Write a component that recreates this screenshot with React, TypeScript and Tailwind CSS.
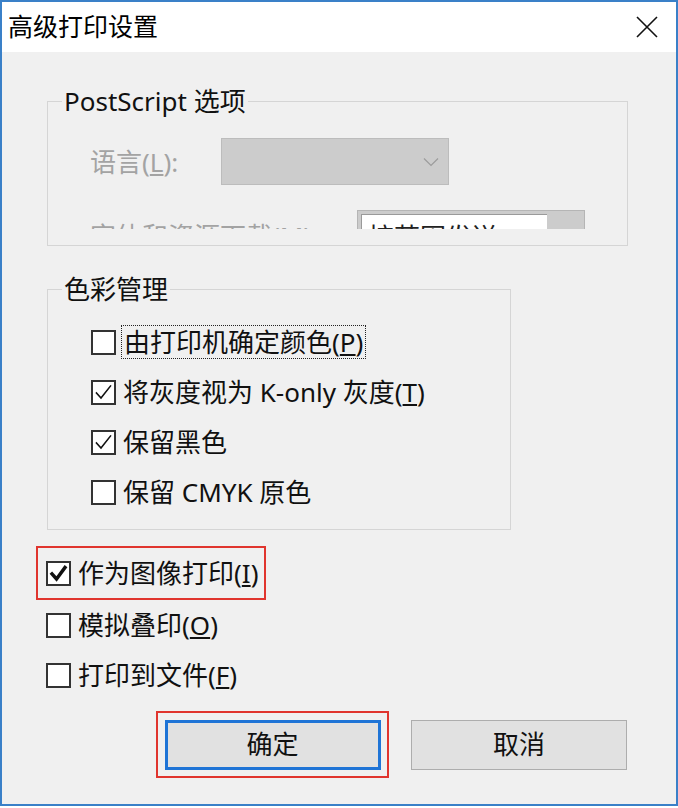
import type { ReactNode } from "react";

const font = "font-['Noto_Sans','Noto_Sans_CJK_SC',sans-serif]";

function Box({ checked, bold }: { checked?: boolean; bold?: boolean }) {
  return (
    <span className="w-[25px] h-[25px] border-2 border-[#333] bg-white flex items-center justify-center shrink-0">
      {checked && (
        <svg width="19" height="19" viewBox="0 0 19 19" fill="none">
          <path
            d={bold ? "M3 10 L7.5 15 L16 3.5" : "M2.5 10 L7 15 L16.5 3"}
            stroke="#111"
            strokeWidth={bold ? 3.4 : 1.6}
            strokeLinecap="square"
          />
        </svg>
      )}
    </span>
  );
}

function Key({ k }: { k: string }) {
  return (
    <span>
      (<span className="underline underline-offset-2">{k}</span>)
    </span>
  );
}

function Row({ checked, bold, children }: { checked?: boolean; bold?: boolean; children: ReactNode }) {
  return (
    <div className="h-[50px] flex items-center gap-[7px]">
      <Box checked={checked} bold={bold} />
      <span className="text-[26px] leading-none text-[#111]">{children}</span>
    </div>
  );
}

export default function App() {
  return (
    <div className={`${font} w-[678px] h-[806px] bg-[#f0f0f0] border-2 border-[#3a80c8] flex flex-col`}>
      <div className="h-[50px] bg-white flex items-center justify-between pl-[6px] pr-[18px]">
        <span className="text-[25px] text-black">高级打印设置</span>
        <svg width="22" height="22" viewBox="0 0 22 22" fill="none">
          <path d="M1 1 L21 21 M21 1 L1 21" stroke="#111" strokeWidth="1.6" />
        </svg>
      </div>

      <div className="flex flex-col pl-[45px]">
        <fieldset className="mt-[32px] w-[581px] border border-[#d5d5d5] pb-[16px]">
          <legend className="ml-[14px] px-[2px] text-[26px] leading-[34px] text-[#111]">PostScript 选项</legend>
          <div className="h-[111px] overflow-hidden pt-[20px] pl-[42px]">
            <div className="h-[47px] flex items-center">
              <span className="w-[131px] text-[26px] leading-none text-[#a3a3a3]">
                语言<Key k="L" />:
              </span>
              <div className="w-[228px] h-[47px] bg-[#cccccc] border border-[#bcbcbc] flex items-center justify-end pr-[9px]">
                <svg width="16" height="10" viewBox="0 0 16 10" fill="none">
                  <path d="M1 1.5 L8 8.5 L15 1.5" stroke="#9c9c9c" strokeWidth="1.2" />
                </svg>
              </div>
            </div>
            <div className="mt-[25px] flex items-start">
              <span className="w-[267px] pt-[13px] text-[26px] leading-none text-[#a3a3a3] whitespace-nowrap">
                字体和资源下载<Key k="M" />:
              </span>
              <div className="w-[228px] h-[40px] bg-[#cccccc] border border-[#b5b5b5] pt-[3px] pl-[3px]">
                <div className="w-[186px] h-[36px] bg-white border-l border-t border-[#9a9a9a] pl-[6px] pt-[9px] text-[26px] leading-none text-[#222]">
                  按范围发送
                </div>
              </div>
            </div>
          </div>
        </fieldset>

        <fieldset className="mt-[26px] w-[464px] border border-[#d5d5d5] pt-[11px] pb-[12px]">
          <legend className="ml-[14px] px-[2px] text-[26px] leading-[34px] text-[#111]">色彩管理</legend>
          <div className="pl-[43px]">
            <div className="h-[50px] flex items-center gap-[5px]">
              <Box />
              <span className="border border-dotted border-[#222] px-[2px] py-[3px] text-[26px] leading-none text-[#111]">
                由打印机确定颜色<Key k="P" />
              </span>
            </div>
            <Row checked>
              将灰度视为 K-only 灰度<Key k="T" />
            </Row>
            <Row checked>保留黑色</Row>
            <Row>保留 CMYK 原色</Row>
          </div>
        </fieldset>

        <div className="mt-[16px] -ml-[11px] w-[230px] h-[54px] border-2 border-[#e0352e] pl-[8px] flex items-center">
          <div className="flex items-center gap-[7px]">
            <Box checked bold />
            <span className="text-[26px] leading-none text-[#111]">
              作为图像打印<Key k="I" />
            </span>
          </div>
        </div>
        <div className="-ml-[1px]">
          <Row>
            模拟叠印<Key k="O" />
          </Row>
          <Row>
            打印到文件<Key k="F" />
          </Row>
        </div>

        <div className="mt-[11px] ml-[109px] flex items-center gap-[22px]">
          <div className="w-[233px] h-[67px] border-2 border-[#e0352e] flex items-center justify-center">
            <button className="w-[216px] h-[50px] bg-[#e1e1e1] border-[3px] border-[#1f74d6] text-[26px] text-[#111]">
              确定
            </button>
          </div>
          <button className="w-[216px] h-[50px] bg-[#e1e1e1] border border-[#adadad] text-[26px] text-[#111]">
            取消
          </button>
        </div>
      </div>
    </div>
  );
}
